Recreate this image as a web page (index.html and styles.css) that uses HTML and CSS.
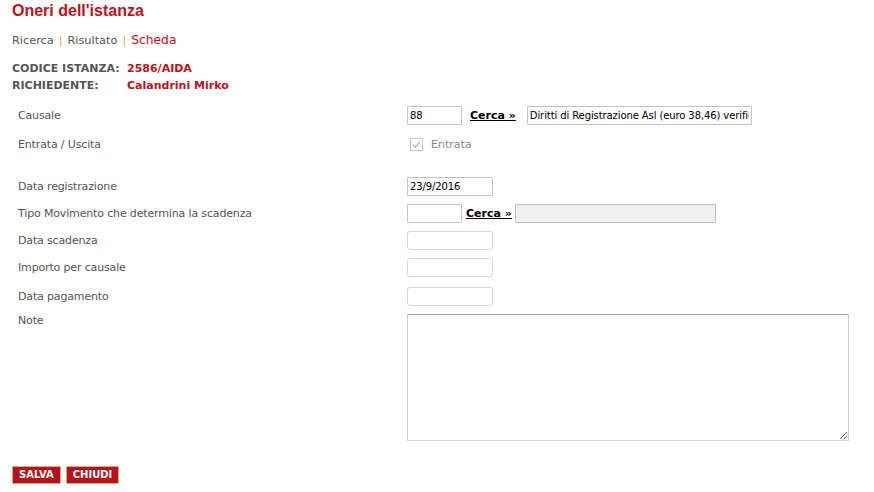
FILE: index.html
```html
<!DOCTYPE html>
<html lang="it">
<head>
<meta charset="utf-8">
<title>Oneri dell'istanza</title>
<link rel="stylesheet" href="styles.css">
</head>
<body>
<div class="page">
  <h1 class="title">Oneri dell'istanza</h1>
  <div class="nav">
    <a class="nav-link">Ricerca</a><span class="sep">|</span><a class="nav-link">Risultato</a><span class="sep">|</span><span class="nav-current">Scheda</span>
  </div>
  <div class="info">
    <div class="info-row"><span class="info-label">CODICE ISTANZA:</span><span class="info-value">2586/AIDA</span></div>
    <div class="info-row"><span class="info-label">RICHIEDENTE:</span><span class="info-value">Calandrini Mirko</span></div>
  </div>
  <div class="form">
    <div class="row">
      <div class="label">Causale</div>
      <div class="ctrl">
        <input class="inp inp-code" type="text" value="88">
        <a class="cerca">Cerca »</a>
        <input class="inp inp-desc" type="text" value="Diritti di Registrazione Asl (euro 38,46) verificato">
      </div>
    </div>
    <div class="row row-tall">
      <div class="label">Entrata / Uscita</div>
      <div class="ctrl">
        <span class="check"><svg width="13" height="13" viewBox="0 0 13 13"><rect x="0.5" y="0.5" width="12" height="12" fill="#fff" stroke="#c8c8c8"/><path d="M3 6.8 L5.2 9.3 L10 3.3" fill="none" stroke="#b4b4b4" stroke-width="1.3"/></svg></span>
        <span class="check-label">Entrata</span>
      </div>
    </div>
    <div class="spacer"></div>
    <div class="row">
      <div class="label">Data registrazione</div>
      <div class="ctrl"><input class="inp inp-date" type="text" value="23/9/2016"></div>
    </div>
    <div class="row">
      <div class="label">Tipo Movimento che determina la scadenza</div>
      <div class="ctrl">
        <input class="inp inp-code" type="text" value="">
        <a class="cerca cerca-2">Cerca »</a>
        <input class="inp inp-grey" type="text" value="" disabled>
      </div>
    </div>
    <div class="row">
      <div class="label">Data scadenza</div>
      <div class="ctrl"><input class="inp inp-date inp-soft" type="text"></div>
    </div>
    <div class="row">
      <div class="label">Importo per causale</div>
      <div class="ctrl"><input class="inp inp-date inp-soft" type="text"></div>
    </div>
    <div class="row row-late">
      <div class="label">Data pagamento</div>
      <div class="ctrl"><input class="inp inp-date inp-soft" type="text"></div>
    </div>
    <div class="row row-note">
      <div class="label label-note">Note</div>
      <div class="ctrl"><textarea class="note"></textarea></div>
    </div>
  </div>
  <div class="buttons">
    <button class="btn">SALVA</button><button class="btn">CHIUDI</button>
  </div>
</div>
</body>
</html>
```

FILE: styles.css
```css
html, body {
  margin: 0;
  padding: 0;
  background: #fff;
}
body {
  font-family: "DejaVu Sans", Verdana, sans-serif;
  font-size: 11px;
  color: #555;
}
.page {
  padding: 2px 12px 0 12px;
}
.title {
  margin: 0;
  font-family: "Liberation Sans", Arial, sans-serif;
  font-size: 16px;
  font-weight: bold;
  color: #c0101c;
  line-height: 18px;
}
.nav {
  margin-top: 11px;
  height: 18px;
  line-height: 18px;
  font-size: 11.3px;
  color: #555;
  display: flex;
  align-items: baseline;
}
.nav-link { color: #555; }
.sep {
  color: #f0a050;
  margin: 0 5px;
}
.nav-current {
  color: #c0101c;
  font-size: 12.3px;
}
.info {
  margin-top: 11px;
}
.info-row {
  display: flex;
  height: 17px;
  line-height: 17px;
  font-weight: bold;
  font-size: 11px;
}
.info-label {
  width: 115px;
  color: #555;
}
.info-value {
  color: #c0101c;
}
.form {
  margin-top: 9px;
  padding-left: 6px;
  display: flex;
  flex-direction: column;
  gap: 3px;
}
.row {
  display: flex;
  align-items: center;
  height: 24px;
}
.row-tall { height: 28px; }
.spacer { height: 10px; }
.row-late { margin-top: 2px; }
.row-note { align-items: flex-start; height: auto; margin-top: 3px; }
.label {
  width: 389px;
  flex: none;
  color: #555;
  letter-spacing: -0.15px;
}
.label-note { line-height: 13px; }
.ctrl {
  display: flex;
  align-items: center;
}
.inp {
  box-sizing: border-box;
  height: 19px;
  margin: 0;
  padding: 0 2px;
  border: 1px solid #c4c4c4;
  border-radius: 1px;
  font-family: "DejaVu Sans", Verdana, sans-serif;
  font-size: 10px;
  letter-spacing: -0.1px;
  color: #000;
  background: #fff;
}
.inp-code { width: 55px; }
.inp-desc { width: 225px; margin-left: 11px; }
.inp-date { width: 86px; }
.inp-soft { border-color: #d6d6dc; border-radius: 3px; }
.inp-grey { width: 201px; margin-left: 3px; background: #f0f0f0; border-color: #c0c0c0; }
.cerca {
  margin-left: 8px;
  font-size: 11px;
  font-weight: bold;
  color: #000;
  text-decoration: underline;
}
.cerca-2 { margin-left: 4px; }
.check {
  display: inline-flex;
  margin-left: 3px;
}
.check-label {
  margin-left: 8px;
  font-size: 11px;
  color: #888;
}
.note {
  box-sizing: border-box;
  width: 442px;
  height: 127px;
  margin: 0;
  border: 1px solid #d0d0d8;
  border-top-color: #a8a8a8;
  resize: both;
}
.buttons {
  margin-top: 25px;
  display: flex;
  gap: 5px;
}
.btn {
  height: 18px;
  padding: 0 6px;
  margin: 0;
  border: 1px solid #c8b67a;
  background: #b5121b;
  color: #fff;
  font-family: "DejaVu Sans", Verdana, sans-serif;
  font-weight: bold;
  font-size: 10px;
  line-height: 16px;
}
```
